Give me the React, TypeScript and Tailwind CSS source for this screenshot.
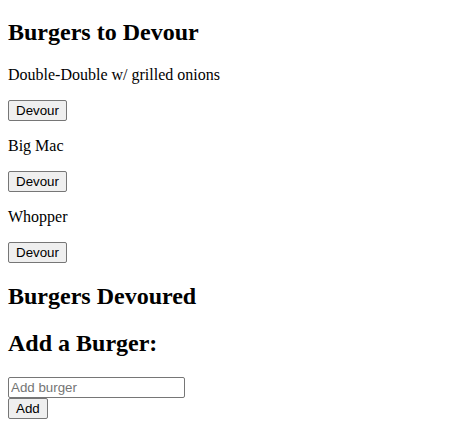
const burgers = ['Double-Double w/ grilled onions', 'Big Mac', 'Whopper']

const btn =
  "block h-[21px] px-[7px] border border-[#767676] rounded-[2px] bg-[#efefef] text-black text-[13.333px] leading-[normal] font-['Liberation_Sans',Arial,sans-serif]"

export default function App() {
  return (
    <div className="min-h-screen bg-white text-black px-2 pt-[0.1px] font-['Liberation_Serif','Times_New_Roman',serif] text-[16px] leading-[normal]">
      <h2 className="text-[24px] font-bold leading-[normal] mt-[18.9px] mb-[19.92px]">Burgers to Devour</h2>

      {burgers.map((name) => (
        <div key={name}>
          <p className="my-4">{name}</p>
          <button className={btn}>Devour</button>
        </div>
      ))}

      <h2 className="text-[24px] font-bold leading-[normal] my-[19.92px]">Burgers Devoured</h2>

      <h2 className="text-[24px] font-bold leading-[normal] my-[19.92px]">Add a Burger:</h2>

      <form onSubmit={(e) => e.preventDefault()}>
        <input
          type="text"
          placeholder="Add burger"
          className="block w-[177px] h-[21px] px-[2px] border border-[#767676] rounded-[2px] bg-white text-[13.333px] font-['Liberation_Sans',Arial,sans-serif] placeholder:text-[#757575]"
        />
        <button className={btn}>Add</button>
      </form>
    </div>
  )
}
